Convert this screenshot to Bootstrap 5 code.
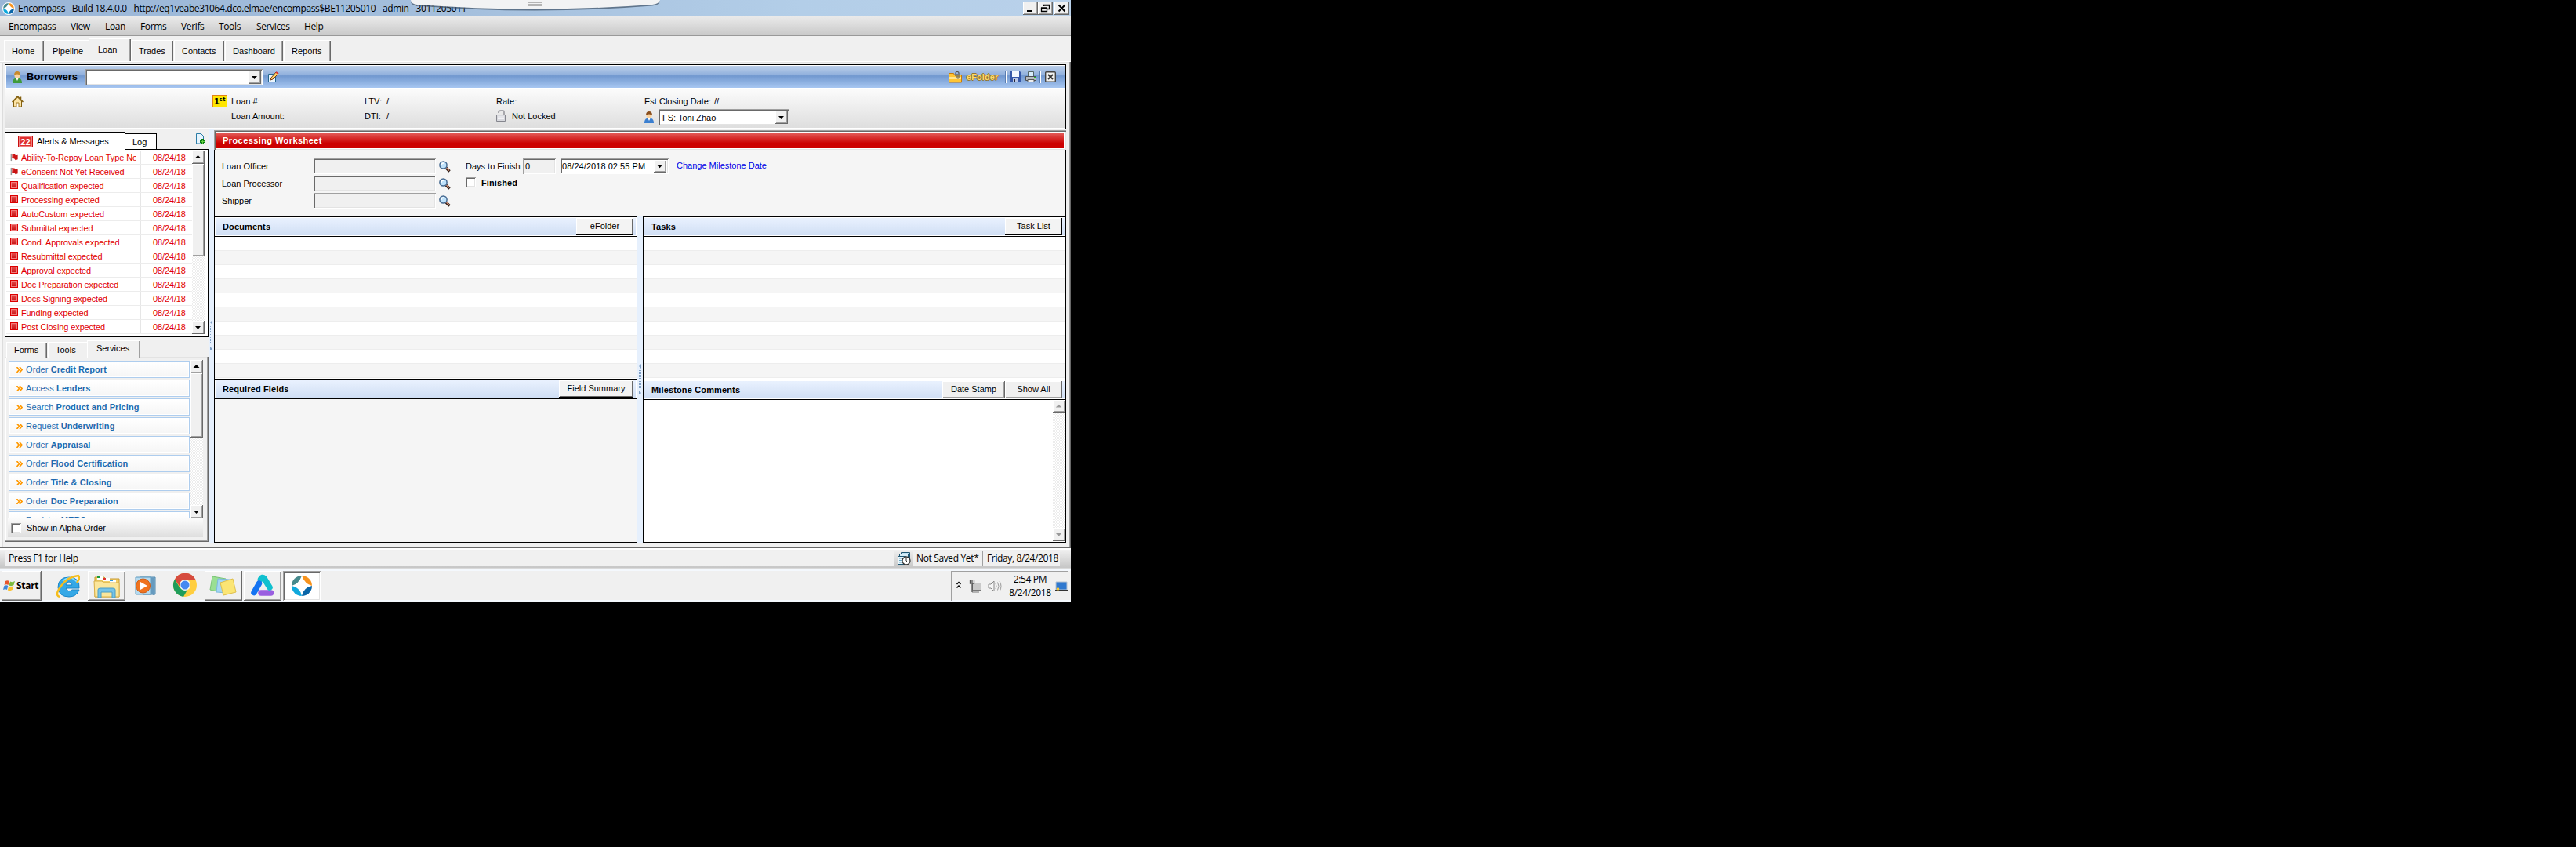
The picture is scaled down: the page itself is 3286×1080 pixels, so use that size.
<!DOCTYPE html>
<html lang="en">
<head>
<meta charset="utf-8">
<title>Encompass</title>
<link href="https://cdn.jsdelivr.net/npm/bootstrap@5.3.0/dist/css/bootstrap.min.css" rel="stylesheet">
<style>
body{background:#000;font:11px/14px "Liberation Sans",Arial,sans-serif;color:#000;overflow:hidden}
svg{display:block;flex:none}
.desk{width:1366px;height:768px;background:#f0f0f0;white-space:nowrap;overflow:hidden}
.seg{font-family:"Open Sans","Noto Sans",sans-serif;font-size:12px;letter-spacing:-.36px}
.titlebar{height:21px;background:linear-gradient(90deg,#9ab6d7,#a3bedc 40%,#b3cee8 75%,#b9d1ea)}
.titletext{letter-spacing:-.4px;padding-top:1px}
.notch{left:522px;top:0}
.raised{background:#f0f0f0;box-shadow:inset -1px -1px #696969,inset 1px 1px #fff,inset -2px -2px #a0a0a0}
.sunken{background:#fff;box-shadow:inset 1px 1px #a0a0a0,inset -1px -1px #fff,inset 2px 2px #696969,inset -2px -2px #e3e3e3}
.winbtn{width:19px;height:17px}
.menubar{height:25px;padding-top:1px;background:linear-gradient(#eaeaea,#c9c9c9);border-bottom:1px solid #999}
.tabstrip{height:32px;padding-left:5px}
.tabitem{height:27px;background:#f0f0f0;box-shadow:inset 1px 1px #fff,inset -1px 0 #696969,inset -2px 0 #a0a0a0;padding-top:7px;padding-left:10px}
.tabitem.tab-on{height:29px;padding-left:12px;padding-top:7px}
.tab-noright{box-shadow:inset 1px 1px #fff}
.pageframe{height:621px;border-top:1px solid #fff;box-shadow:inset -1px -1px #696969,inset -2px -2px #a0a0a0,inset 0 1px #e3e3e3,inset 3px 0 #f6f6f6,inset 4px 0 #dcdcdc;padding:3px 6px 0 6px}
.headbox{width:1354px;height:83px;border:1px solid #000;background:#fff}
.bluebar{height:30px;border:1px solid #fff;background:linear-gradient(#bdd0ea,#8fafdc 42%,#7198cf 45%,#a7c6f1);background-clip:padding-box}
.infobar{height:51px;border-top:1px solid #000;border-right:1px solid #fff;border-bottom:1px solid #fff;background:linear-gradient(#fbfbfb,#dedede)}
.infotext{height:19px}
.leftcol{width:260px}
.alertbox{width:260px;height:239px;border:1px solid #000;border-top:0;background:#fff;padding:0 4px 3px 1px}
.log-head{height:23px;margin-top:3px}
.alert-tab{width:154px;height:23px;border:1px solid #000;border-bottom:0;background:#fff;padding:4px 0 0 16px}
.log-tab{width:40px;height:20px;border:1px solid #000;border-left:0;border-bottom:0;background:#fff;padding:3px 0 0 9px}
.log-rule{height:1px;background:#000}
.badge22{width:19px;height:15px;background:#e0302f;border:1px solid #c80f10;box-shadow:inset 0 0 0 1px #f08080;color:#fff;font-weight:bold;line-height:14px;text-align:center;letter-spacing:.2px}
.arow{height:18px;border-bottom:1px solid #ececec;color:#e10000;letter-spacing:-.12px;line-height:18px}
.arow:nth-child(1){height:19px;padding-top:1px}
.amsg{width:172px;padding-left:5px;border-right:1px solid #e6e6e6}
.amsg svg{margin:3px 3px 0 0}
.amsg span{width:146px;overflow:hidden;display:block}
.adate{padding-left:15px}
.sq{width:10px;height:10px;background:linear-gradient(#e85050,#c41010);border:1px solid #dd0000;box-shadow:inset 0 0 0 1px #f07c7c;margin:3px 4px 0 0}
.sbar{width:16px;background:repeating-conic-gradient(#fff 0 25%,#ececec 0 50%) 0 0/2px 2px}
.lowtabs{height:22px;margin-top:4px;padding-left:2px}
.tabitem.lowtab{height:20px;padding:3px 0 0 10px}
.tabitem.lowtab.tab-on{height:22px;padding:3px 0 0 12px}
.lowpanel{width:260px;height:236px;margin-top:-1px;padding:4px 6px 0 4px;box-shadow:inset -1px -1px #696969,inset -2px -2px #a0a0a0,inset 1px 1px #e3e3e3,inset 2px 2px #fff}
.svc-list{width:233px;height:202px;padding:1px 1px 0 1px;overflow:hidden;border-bottom:1px solid #bbb}
.svc{height:22px;margin-bottom:2px;border:1px solid #aecdee;background:linear-gradient(#fff,#f5f5f5);box-shadow:inset 0 0 0 1px #fff;color:#1c6bb0;padding-left:9px;letter-spacing:.08px}
.svc svg{margin-right:4px}
.alpha{height:24px;width:249px;background:linear-gradient(#fbfbfb,#dedede);padding-left:4px}
.chk{width:13px;height:13px}
.split{width:7px;background:#e6f0fd}
.redhead{height:25px;padding:3px 3px 2px 2px;background:#fff;box-shadow:inset 1px 1px #a0a0a0,inset 2px 2px #696969,inset -1px -1px #e3e3e3}
.redfill{background:linear-gradient(#e4605d,#cc0000 68%);color:#fff;font-weight:bold;letter-spacing:.42px;padding:3px 0 0 9px;height:20px}
.formarea{height:85px;background:#f5f5f5;border:solid #000;border-width:0 1px;padding-top:10px}
.frow{height:22px}
.flabel{width:126px;padding-left:9px}
.fbox{width:156px;height:20px;background:#f0f0f0}
.pane{width:540px;background:#fff;border:1px solid #000}
.phead{height:24px;border:1px solid #fff;border-bottom:0;background:linear-gradient(#e9f1fe,#cfdef4);box-shadow:inset 0 -1px #fff,0 1px #000;margin-bottom:1px;font-weight:bold;letter-spacing:.14px;padding:0 3px 0 9px}
.phead>span{padding-top:4px}
.pbtn{height:22px;width:73px;font-weight:normal;letter-spacing:0;background:#f3f3f3;box-shadow:inset -1px -1px #000,inset 1px 1px #fff,inset -2px -2px #696969;text-align:center;line-height:21px}
.pbtn.raised{background:#f0f0f0;box-shadow:inset -1px -1px #696969,inset 1px 1px #fff,inset -2px -2px #a0a0a0}
.stripes{height:180px;background:linear-gradient(90deg,transparent 19px,#ededed 19px,#ededed 20px,transparent 20px),repeating-linear-gradient(#fff 0 17px,#ededed 17px 18px,#f5f5f5 18px 35px,#ededed 35px 36px)}
.statusbar{height:26px;background:linear-gradient(#f0f0f0,#c6c6c6);border-top:2px solid #fff;border-bottom:1px solid #d9d9d9;padding:1px 14px 2px 7px}
.stcell{background:#f0f0f0;height:20px;line-height:20px}
.taskbar{height:43px;background:#f0f0f0;border-top:3px solid #f4f8fd;border-bottom:3px solid #f4f8fd}
.tbtn{height:38px;width:48px}
.tray{border:1px solid #a0a0a0;border-right:0;border-bottom:0;height:38px;width:150px}
.linkblue{color:#0000e6}
.efold{color:#ffd968;font-weight:bold;width:49px;letter-spacing:.1px;text-shadow:1px 0 #94752f,-1px 0 #94752f,0 1px #94752f,0 -1px #94752f}
.vsep{width:2px;height:16px;background:#5a7db0;border-right:1px solid #fff}
</style>
</head>
<body>
<svg width="0" height="0" style="display:none">
<defs>
<symbol id="flag" viewBox="0 0 11 12"><path d="M1 1v10" stroke="#999" stroke-width="1.6"/><path d="M2 1l4 1 1 1.500 3-.5v6l-3 1-2-2-3-.5z" fill="#c91313"/><path d="M2 2h2v4H2z" fill="#e88"/></symbol>
<symbol id="lens" viewBox="0 0 15 15"><path d="M9 9l4.500 4.500" stroke="#2b1a14" stroke-width="3.400"/><path d="M9.500 9l3.500 3.500" stroke="#d99076" stroke-width="1.400"/><circle cx="5.500" cy="5.500" r="4.600" fill="#bfe2fb" stroke="#44688f" stroke-width="1.500"/><path d="M3 6q0-3 3-3" stroke="#fff" stroke-width="1.300" fill="none"/></symbol>
<symbol id="up" viewBox="0 0 16 17"><path d="M7.500 6l4 4h-8z"/></symbol>
<symbol id="down" viewBox="0 0 16 17"><path d="M4 7h7l-3.500 4z"/></symbol>
<symbol id="raq" viewBox="0 0 8 7"><path d="M.5 0l3 3.500-3 3.500M4 0l3 3.500L4 7" fill="none" stroke="#f90" stroke-width="1.700"/></symbol>
<symbol id="grip" viewBox="0 0 7 38"><path d="M5 0v6L2 3zM2 34v6l3-3z" fill="#7f9fc4"/><path d="M2.500 8v24M4.500 8v24" stroke="#7f9fc4" stroke-dasharray="1 1"/></symbol>
<symbol id="enc" viewBox="0 0 26 26"><path d="M13 0A13 13 0 000 13q9-2 13-13z" fill="#46898c"/><path d="M13 0a13 13 0 0113 13Q17 11 13 0z" fill="#f7931e"/><path d="M0 13a13 13 0 0013 13Q11 15 0 13z" fill="#0fa8dc"/><path d="M26 13a13 13 0 01-13 13Q15 15 26 13z" fill="#0a66a8"/></symbol>
</defs>
</svg>
<div class="desk d-flex flex-column">
  <header class="titlebar position-relative d-flex align-items-center flex-shrink-0">
    <svg style="margin-left:3px" width="16" height="16" viewBox="-2 -2 30 30"><circle cx="13" cy="13" r="15" fill="#fff"/><use href="#enc" width="26" height="26"/></svg>
    <span class="seg titletext ms-1">Encompass - Build 18.4.0.0 - http://eq1veabe31064.dco.elmae/encompass$BE11205010 - admin - 3011205011</span>
    <div class="position-absolute notch"><svg width="322" height="15"><path d="M2 0q0 5 8 6 150 12 300 0 9-1 10-6z" fill="#3f5268" opacity=".7" transform="translate(0 1.500)"/><path d="M2 0q0 5 8 6 150 11 300 0 9-1 10-6z" fill="#f2f3f4"/><path d="M152 3.500h18M152 5.500h18M152 7.500h18" stroke="#b4b4b4"/></svg></div>
    <div class="d-flex ms-auto" style="margin-right:2px">
      <div class="raised winbtn"><svg width="19" height="17"><path d="M5 12h7" stroke="#000" stroke-width="2"/></svg></div>
      <div class="raised winbtn"><svg width="19" height="17"><path d="M7.500 6V4.500h7v5H12M7 5h8M4.500 8.500h7v4h-7zM4 8h8" stroke="#000" fill="none" stroke-width="1.300"/></svg></div>
      <div class="raised winbtn" style="margin-left:2px"><svg width="19" height="17"><path d="M5.500 4.500l8 8M13.500 4.500l-8 8" stroke="#000" stroke-width="2"/></svg></div>
    </div>
  </header>
  <nav class="menubar seg d-flex align-items-center flex-shrink-0">
    <span style="width:90px;padding-left:11px">Encompass</span><span style="width:44px">View</span><span style="width:45px">Loan</span><span style="width:52px">Forms</span><span style="width:48px">Verifs</span><span style="width:48px">Tools</span><span style="width:61px">Services</span><span>Help</span>
  </nav>
  <div class="tabstrip d-flex align-items-end flex-shrink-0">
    <div class="tabitem" style="width:51px">Home</div>
    <div class="tabitem tab-noright" style="width:56px;margin-left:1px">Pipeline</div>
    <div class="tabitem tab-on" style="width:54px">Loan</div>
    <div class="tabitem" style="width:54px">Trades</div>
    <div class="tabitem" style="width:64px;margin-left:1px">Contacts</div>
    <div class="tabitem" style="width:74px;margin-left:1px">Dashboard</div>
    <div class="tabitem" style="width:60px;margin-left:1px">Reports</div>
  </div>
  <main class="pageframe flex-shrink-0">
    <section class="headbox">
      <div class="bluebar d-flex align-items-center">
        <svg width="12" height="15" style="margin-left:8px"><path d="M0 15q0-5 3-6h6q3 1 3 6z" fill="#3f9a3c"/><path d="M4 8l2 4 2-4z" fill="#fff"/><circle cx="6" cy="5" r="3.600" fill="#fad3a0"/><path d="M2 5q0-5 4-5t4 5q-4-3-8 0z" fill="#c88a2c"/></svg>
        <b style="font-size:13px;margin-left:6px;width:75px">Borrowers</b>
        <div class="sunken d-flex justify-content-end" style="width:226px;height:21px;padding:2px"><svg class="raised" width="16" height="17"><use href="#down" width="16" height="17"/></svg></div>
        <svg width="15" height="15" style="margin-left:6px"><path d="M1.500 3.500h9v10h-9z" fill="#eaf5fd" stroke="#24668e"/><path d="M4 11l1-3 6-7 3 2-7 7z" fill="#fbd66b" stroke="#7b3a17"/><path d="M11 1l3 2" stroke="#d33" stroke-width="2"/></svg>
        <svg width="17" height="15" class="ms-auto"><path d="M.5 2.500h6l1 2h9v9.500H.5z" fill="#ffc534" stroke="#c87a08"/><path d="M1 7h15v3H1z" fill="#ffe590"/><path d="M9 6V2q0-1.500 2-1.500t2 1.500v6q0 1-1 1t-1-1V3" fill="none" stroke="#555" stroke-width="1.200"/></svg>
        <span class="efold" style="margin-left:6px">eFolder</span>
        <div class="vsep"></div>
        <svg width="14" height="14" style="margin-left:4px"><path d="M0 0h13l1 1v13H0z" fill="#3658a8"/><path d="M3 0h9v7H3z" fill="#f3f8ff"/><path d="M4 9h7v5H4z" fill="#b9c7e6"/><path d="M5 10h2v3H5z" fill="#223"/></svg>
        <svg width="14" height="14" style="margin-left:6px"><path d="M3.500 6V.5h7V6" fill="#d7ecfb" stroke="#566"/><path d="M.5 6.500h13v5H.5z" fill="#b8bcc0" stroke="#4b4f54"/><path d="M3 10.500h8v3H3z" fill="#eee" stroke="#555"/><path d="M11 8h2" stroke="#2b2" stroke-width="2"/></svg>
        <div class="vsep ms-1"></div>
        <svg width="14" height="14" style="margin:0 11px 0 5px"><rect x=".7" y=".7" width="12.600" height="12.600" rx="1" fill="#f1f1ef" stroke="#444" stroke-width="1.400"/><path d="M4 4l6 6M10 4l-6 6" stroke="#333" stroke-width="1.800"/></svg>
      </div>
      <div class="infobar d-flex">
        <svg width="15" height="15" style="margin:8px 0 0 8px"><path d="M2.500 7v7h10V7L7.500 2z" fill="#fbe3a4" stroke="#84600f"/><path d="M.5 8l7-7 7 7M11.500 1.500V5" fill="none" stroke="#84600f" stroke-width="1.500"/><path d="M6 14V9h3v5" fill="#fff" stroke="#a67c20"/></svg>
        <div style="width:241px"></div>
        <svg width="19" height="16" style="margin-top:7px"><rect x=".5" y=".5" width="18" height="15" fill="#ffe600" stroke="#e0831a"/><text x="2" y="12" font-family="DejaVu Sans" font-size="10" font-weight="bold">1</text><text x="8.500" y="8" font-family="DejaVu Sans" font-size="7" font-weight="bold" textLength="8">st</text></svg>
        <div style="padding:8px 0 0 5px;width:175px"><div class="infotext">Loan #:</div><div>Loan Amount:</div></div>
        <div style="padding-top:8px;width:168px"><div class="infotext"><span class="d-inline-block" style="width:28px">LTV:</span>/</div><div><span class="d-inline-block" style="width:28px">DTI:</span>/</div></div>
        <div style="padding-top:8px;width:189px"><div class="infotext">Rate:</div><div class="d-flex"><svg width="13" height="16" style="margin:-1px 7px 0 0"><path d="M3 4V3q0-2 3-2h2q2 0 2 2v4" fill="none" stroke="#a8a8ad" stroke-width="2"/><path d="M.5 6.500h11v8H.5z" fill="#d8d9de" stroke="#85868e"/><path d="M2 9h8M2 11.500h8" stroke="#f2f2f5"/></svg>Not Locked</div></div>
        <div style="padding-top:8px"><div style="height:17px"><span class="d-inline-block" style="width:89px">Est Closing Date:</span>//</div>
          <div class="d-flex"><svg width="12" height="15" style="margin:3px 6px 0 0"><path d="M0 15q0-5 3-6h6q3 1 3 6z" fill="#3b7fd0"/><path d="M4 8l2 4 2-4z" fill="#fff"/><circle cx="6" cy="5" r="3.600" fill="#fad3a0"/><path d="M2 5q0-5 4-5t4 5q-4-3-8 0z" fill="#8a4f1e"/></svg>
          <div class="sunken d-flex justify-content-between" style="width:167px;height:21px;padding:2px 2px 2px 5px;line-height:18px">FS: Toni Zhao<svg class="raised" width="16" height="17"><use href="#down" width="16" height="17"/></svg></div></div></div>
      </div>
    </section>
    <div class="d-flex" style="height:527px">
      <aside class="leftcol">
        <div class="log-head d-flex">
          <div class="alert-tab d-flex"><span class="badge22">22</span><span style="margin-left:5px">Alerts &amp; Messages</span></div>
          <div class="d-flex flex-column flex-grow-1">
            <div class="d-flex" style="padding-top:2px;height:22px"><div class="log-tab">Log</div>
            <svg width="14" height="15" style="margin-left:49px"><path d="M1.500.5h6l3 3v9.500h-9z" fill="#e6f4fd" stroke="#2b7ca6"/><path d="M7.500.5v3h3" fill="none" stroke="#2b7ca6"/><path d="M9.500 7v7M6 10.500h7" stroke="#0a7a10" stroke-width="3"/><path d="M9.500 8v5M7 10.500h5" stroke="#62d040"/></svg></div>
            <div class="log-rule"></div>
          </div>
        </div>
        <div class="alertbox d-flex">
          <div style="width:238px;height:235px">
            <div class="arow d-flex"><div class="amsg d-flex"><svg width="11" height="11"><use href="#flag"/></svg><span>Ability-To-Repay Loan Type No</span></div><div class="adate">08/24/18</div></div>
            <div class="arow d-flex"><div class="amsg d-flex"><svg width="11" height="11"><use href="#flag"/></svg><span>eConsent Not Yet Received</span></div><div class="adate">08/24/18</div></div>
            <div class="arow d-flex"><div class="amsg d-flex"><i class="sq"></i><span>Qualification expected</span></div><div class="adate">08/24/18</div></div>
            <div class="arow d-flex"><div class="amsg d-flex"><i class="sq"></i><span>Processing expected</span></div><div class="adate">08/24/18</div></div>
            <div class="arow d-flex"><div class="amsg d-flex"><i class="sq"></i><span>AutoCustom expected</span></div><div class="adate">08/24/18</div></div>
            <div class="arow d-flex"><div class="amsg d-flex"><i class="sq"></i><span>Submittal expected</span></div><div class="adate">08/24/18</div></div>
            <div class="arow d-flex"><div class="amsg d-flex"><i class="sq"></i><span>Cond. Approvals expected</span></div><div class="adate">08/24/18</div></div>
            <div class="arow d-flex"><div class="amsg d-flex"><i class="sq"></i><span>Resubmittal expected</span></div><div class="adate">08/24/18</div></div>
            <div class="arow d-flex"><div class="amsg d-flex"><i class="sq"></i><span>Approval expected</span></div><div class="adate">08/24/18</div></div>
            <div class="arow d-flex"><div class="amsg d-flex"><i class="sq"></i><span>Doc Preparation expected</span></div><div class="adate">08/24/18</div></div>
            <div class="arow d-flex"><div class="amsg d-flex"><i class="sq"></i><span>Docs Signing expected</span></div><div class="adate">08/24/18</div></div>
            <div class="arow d-flex"><div class="amsg d-flex"><i class="sq"></i><span>Funding expected</span></div><div class="adate">08/24/18</div></div>
            <div class="arow d-flex"><div class="amsg d-flex"><i class="sq"></i><span>Post Closing expected</span></div><div class="adate">08/24/18</div></div>
          </div>
          <div class="sbar d-flex flex-column" style="margin-top:1px">
            <svg class="raised" width="16" height="17"><use href="#up" width="16" height="17"/></svg>
            <div class="raised" style="height:118px"></div>
            <svg class="raised mt-auto" width="16" height="17"><use href="#down" width="16" height="17"/></svg>
          </div>
        </div>
        <div class="lowtabs d-flex align-items-end">
          <div class="tabitem lowtab" style="width:52px">Forms</div>
          <div class="tabitem lowtab tab-noright" style="width:50px;margin-left:1px">Tools</div>
          <div class="tabitem lowtab tab-on" style="width:68px">Services</div>
        </div>
        <div class="lowpanel">
          <div class="d-flex">
            <div class="svc-list">
              <div class="svc d-flex align-items-center"><svg width="8" height="7"><use href="#raq"/></svg><span>Order <b>Credit Report</b></span></div>
              <div class="svc d-flex align-items-center"><svg width="8" height="7"><use href="#raq"/></svg><span>Access <b>Lenders</b></span></div>
              <div class="svc d-flex align-items-center"><svg width="8" height="7"><use href="#raq"/></svg><span>Search <b>Product and Pricing</b></span></div>
              <div class="svc d-flex align-items-center"><svg width="8" height="7"><use href="#raq"/></svg><span>Request <b>Underwriting</b></span></div>
              <div class="svc d-flex align-items-center"><svg width="8" height="7"><use href="#raq"/></svg><span>Order <b>Appraisal</b></span></div>
              <div class="svc d-flex align-items-center"><svg width="8" height="7"><use href="#raq"/></svg><span>Order <b>Flood Certification</b></span></div>
              <div class="svc d-flex align-items-center"><svg width="8" height="7"><use href="#raq"/></svg><span>Order <b>Title &amp; Closing</b></span></div>
              <div class="svc d-flex align-items-center"><svg width="8" height="7"><use href="#raq"/></svg><span>Order <b>Doc Preparation</b></span></div>
              <div class="svc d-flex align-items-center"><svg width="8" height="7"><use href="#raq"/></svg><span>Register <b>MERS</b></span></div>
            </div>
            <div class="sbar d-flex flex-column" style="height:202px">
              <svg class="raised" width="16" height="17"><use href="#up" width="16" height="17"/></svg>
              <div class="raised" style="height:82px"></div>
              <svg class="raised mt-auto" width="16" height="17"><use href="#down" width="16" height="17"/></svg>
            </div>
          </div>
          <div class="alpha d-flex align-items-center"><span class="sunken chk"></span><span style="margin-left:7px">Show in Alpha Order</span></div>
        </div>
      </aside>
      <div class="split"><svg width="7" height="40" style="margin-top:243px"><use href="#grip" width="7" height="38"/></svg></div>
      <section style="width:1087px;padding-top:1px">
        <div class="redhead"><div class="redfill">Processing Worksheet</div></div>
        <div class="formarea d-flex">
          <div>
            <div class="d-flex align-items-center frow"><span class="flabel">Loan Officer</span><div class="sunken fbox"></div><svg width="15" height="15" class="ms-1"><use href="#lens"/></svg></div>
            <div class="d-flex align-items-center frow"><span class="flabel">Loan Processor</span><div class="sunken fbox"></div><svg width="15" height="15" class="ms-1"><use href="#lens"/></svg></div>
            <div class="d-flex align-items-center frow"><span class="flabel">Shipper</span><div class="sunken fbox"></div><svg width="15" height="15" class="ms-1"><use href="#lens"/></svg></div>
          </div>
          <div style="margin-left:19px">
            <div class="d-flex align-items-center frow"><span style="width:73px">Days to Finish</span><div class="sunken fbox" style="width:42px;padding:3px">0</div>
              <div class="sunken d-flex justify-content-between" style="width:138px;height:20px;margin-left:6px;padding:2px 3px 2px 2px;line-height:17px;letter-spacing:.05px">08/24/2018 02:55 PM<svg class="raised" width="16" height="16"><use href="#down" width="16" height="16"/></svg></div>
              <span class="linkblue" style="margin:-2px 0 0 10px">Change Milestone Date</span></div>
            <div class="d-flex align-items-center" style="height:19px"><span class="sunken chk"></span><b style="margin-left:7px;letter-spacing:.1px">Finished</b></div>
          </div>
        </div>
        <div class="d-flex" style="height:416px">
          <div class="d-flex flex-column">
            <div class="pane" style="height:208px"><div class="phead d-flex justify-content-between"><span>Documents</span><div class="pbtn">eFolder</div></div><div class="stripes"></div></div>
            <div class="pane" style="height:209px;margin-top:-1px;background:#f5f5f5"><div class="phead d-flex justify-content-between"><span>Required Fields</span><div class="pbtn" style="width:95px">Field Summary</div></div></div>
          </div>
          <div class="split"><svg width="7" height="40" style="margin-top:188px"><use href="#grip" width="7" height="38"/></svg></div>
          <div class="d-flex flex-column">
            <div class="pane" style="height:209px"><div class="phead d-flex justify-content-between"><span>Tasks</span><div class="pbtn">Task List</div></div><div class="stripes"></div></div>
            <div class="pane" style="height:208px;margin-top:-1px"><div class="phead d-flex"><span>Milestone Comments</span><div class="pbtn raised ms-auto" style="width:80px">Date Stamp</div><div class="pbtn raised">Show All</div></div>
              <div class="sbar d-flex flex-column ms-auto" style="height:180px">
                <svg class="raised" width="16" height="16" fill="#999"><use href="#up" width="16" height="16"/></svg>
                <svg class="raised mt-auto" width="16" height="17" fill="#999"><use href="#down" width="16" height="17"/></svg>
              </div></div>
          </div>
        </div>
      </section>
    </div>
  </main>
  <div class="statusbar seg d-flex flex-shrink-0">
    <div class="stcell flex-grow-1" style="padding-left:4px">Press F1 for Help</div>
    <div style="border-left:1px solid #a0a0a0;width:25px;padding:2px 0 0 4px"><svg width="17" height="17"><path d="M4.500.5h11v9h-11z" fill="#bfe0f2" stroke="#1f5673"/><path d="M2.500 2.500h11v9h-11z" fill="#d6edf8" stroke="#1f5673"/><path d="M.5 5.500h10v10H.5z" fill="#e8f5fb" stroke="#1f5673"/><path d="M2 8h6M2 10.500h4M2 13h4" stroke="#6aa6c4"/><circle cx="11" cy="11" r="5" fill="#fff" stroke="#333" stroke-width="1.300"/><path d="M11 8v3l2 2" fill="none" stroke="#333"/></svg></div>
    <div class="stcell" style="width:88px;padding-left:4px">Not Saved Yet*</div>
    <div class="stcell" style="border-left:1px solid #a0a0a0;width:99px;padding-left:5px">Friday, 8/24/2018</div>
  </div>
  <footer class="taskbar d-flex align-items-start flex-shrink-0">
    <div class="raised tbtn d-flex align-items-center seg" style="width:51px;margin-left:2px"><svg width="16" height="16" style="margin-left:2px"><path d="M3 2q2-1.500 5 0L6.500 7q-2-1.500-5 0z" fill="#e8552b"/><path d="M9 2.500q3 1.500 6-.5l-1.500 5q-3 2-6 .5z" fill="#7cba3c"/><path d="M1.300 8q3-1.500 5 0L5 13q-2-1.500-5 0z" fill="#3f86d8"/><path d="M7.300 8.500q3 1.500 6-.5l-1.500 5q-3 2-6 .5z" fill="#fbc02d"/></svg><b style="margin-left:1px;letter-spacing:-.3px">Start</b></div>
    <svg width="30" height="32" style="margin:3px 0 0 19px" viewBox="0 0 30 32"><path d="M20 21q-5 4-8-2h17Q30 5 16 5T2 18q1 12 14 12 10 0 13-9zM12 15q1-4 4-4t4 4z" fill="#35a8e6" stroke="#1b86c8" fill-rule="evenodd"/><path d="M8 10q4-4 9-4t9 5" stroke="#8fe0fb" stroke-width="1.500" fill="none"/><path d="M4 30Q-3 28 6 16T28 3q3 3-2 9" fill="none" stroke="#f5bd1d" stroke-width="2.400"/></svg>
    <div class="raised tbtn" style="margin-left:10px"><svg width="48" height="38"><path d="M9 8h12l2 2h17v23H9z" fill="#f2cf68" stroke="#c99b31"/><path d="M12 7h8v4h-8zM19 9h9v4h-9zM28 11h8v4h-8z" fill="#fff"/><path d="M12 7h3v2h-3z" fill="#1b9b3a"/><path d="M20 9h3v2h-3z" fill="#d33"/><path d="M28 11h4v2h-4z" fill="#39d"/><path d="M8 13h10l2 2h20v18H9z" fill="#fbe69b" stroke="#d8b04a"/><path d="M13 34V24q0-2 3-2h16q3 0 3 2v10h-4v-7H17v7z" fill="#74c3e8" stroke="#4a9cc6"/></svg></div>
    <svg width="30" height="28" style="margin:6px 0 0 12px"><path d="M6 2h20v22H10z" fill="#8fb9d6" stroke="#4d86ad"/><path d="M1 2h19v22H1z" fill="#b5d9ee" stroke="#5c9abf"/><path d="M24 3v22M22 3v21" stroke="#3f7da8"/><circle cx="10.500" cy="13" r="9" fill="#f0731e" stroke="#cf5a12"/><path d="M7 8l9 5-9 5z" fill="#fff"/></svg>
    <svg width="32" height="32" style="margin:2px 0 0 18px" viewBox="0 0 32 32"><circle cx="16" cy="16" r="15" fill="#ffce3f"/><path d="M3 8.500A15 15 0 0014 31l6.500-11.500L16 22l-7-3z" fill="#1f9d5a"/><path d="M3 8.500A15 15 0 0129.500 9H16l-6 10z" fill="#d64b3e"/><circle cx="16" cy="16" r="7" fill="#f4f4f4"/><circle cx="16" cy="16" r="5.500" fill="#4688f1"/></svg>
    <div class="raised tbtn" style="margin-left:9px"><svg width="48" height="38"><path d="M10 7l17 3-3 18-17-4z" fill="#9adf93" stroke="#78c474"/><path d="M17 10l15 1-1 17-16-1z" fill="#a5d7f5" stroke="#7db9dd"/><path d="M20 15l16-5 4 17-16 4z" fill="#fbe574" stroke="#dfbf4a"/></svg></div>
    <div class="raised tbtn" style="margin-left:2px"><svg width="48" height="38" fill="none" stroke-width="7.500" stroke-linecap="round" stroke-linejoin="round"><path d="M22 28h12.500" stroke="#9a5fe0"/><path d="M21.500 10.500q2-3.500 4.500-1L33 21" stroke="#10c0cf"/><path d="M19.500 16L13 27.500" stroke="#1473f2"/></svg></div>
    <div class="sunken tbtn" style="margin-left:2px"><svg width="26" height="26" viewBox="0 0 26 26" style="margin:6px 0 0 11px"><use href="#enc"/></svg></div>
    <div class="tray d-flex ms-auto" style="margin-right:3px">
      <svg width="70" height="36"><path d="M6.500 16l2.500-2.500 2.500 2.500M6.500 20.500L9 18l2.500 2.500" fill="none" stroke="#000" stroke-width="1.500"/><path d="M26.500 14.500h11v9h-11z" fill="#c9c9c9" stroke="#777"/><path d="M26 26h9" stroke="#777"/><path d="M23.500 10v5h5v-5M26 10v5M26 16v10" fill="none" stroke="#555" stroke-width="1.300"/><path d="M47 16h3l4-4v13l-4-4h-3z" fill="#f5f5f5" stroke="#888"/><path d="M56 15q2 3.500 0 7M58.500 13.500q3 5 0 10M61 12q4 6.500 0 13" fill="none" stroke="#999"/></svg>
      <div class="seg text-center" style="width:60px;line-height:17px;padding-top:1px">2:54 PM<br>8/24/2018</div>
      <svg width="17" height="15" style="margin:12px 0 0 2px"><path d="M1 1h14v10H1z" fill="#2f78cf" stroke="#b9c4d2"/><path d="M0 12h16" stroke="#333" stroke-width="2"/><circle cx="3.500" cy="10" r="1.800" fill="#fc3"/></svg>
    </div>
  </footer>
</div>
<script src="https://cdn.jsdelivr.net/npm/bootstrap@5.3.0/dist/js/bootstrap.bundle.min.js"></script>
</body>
</html>
